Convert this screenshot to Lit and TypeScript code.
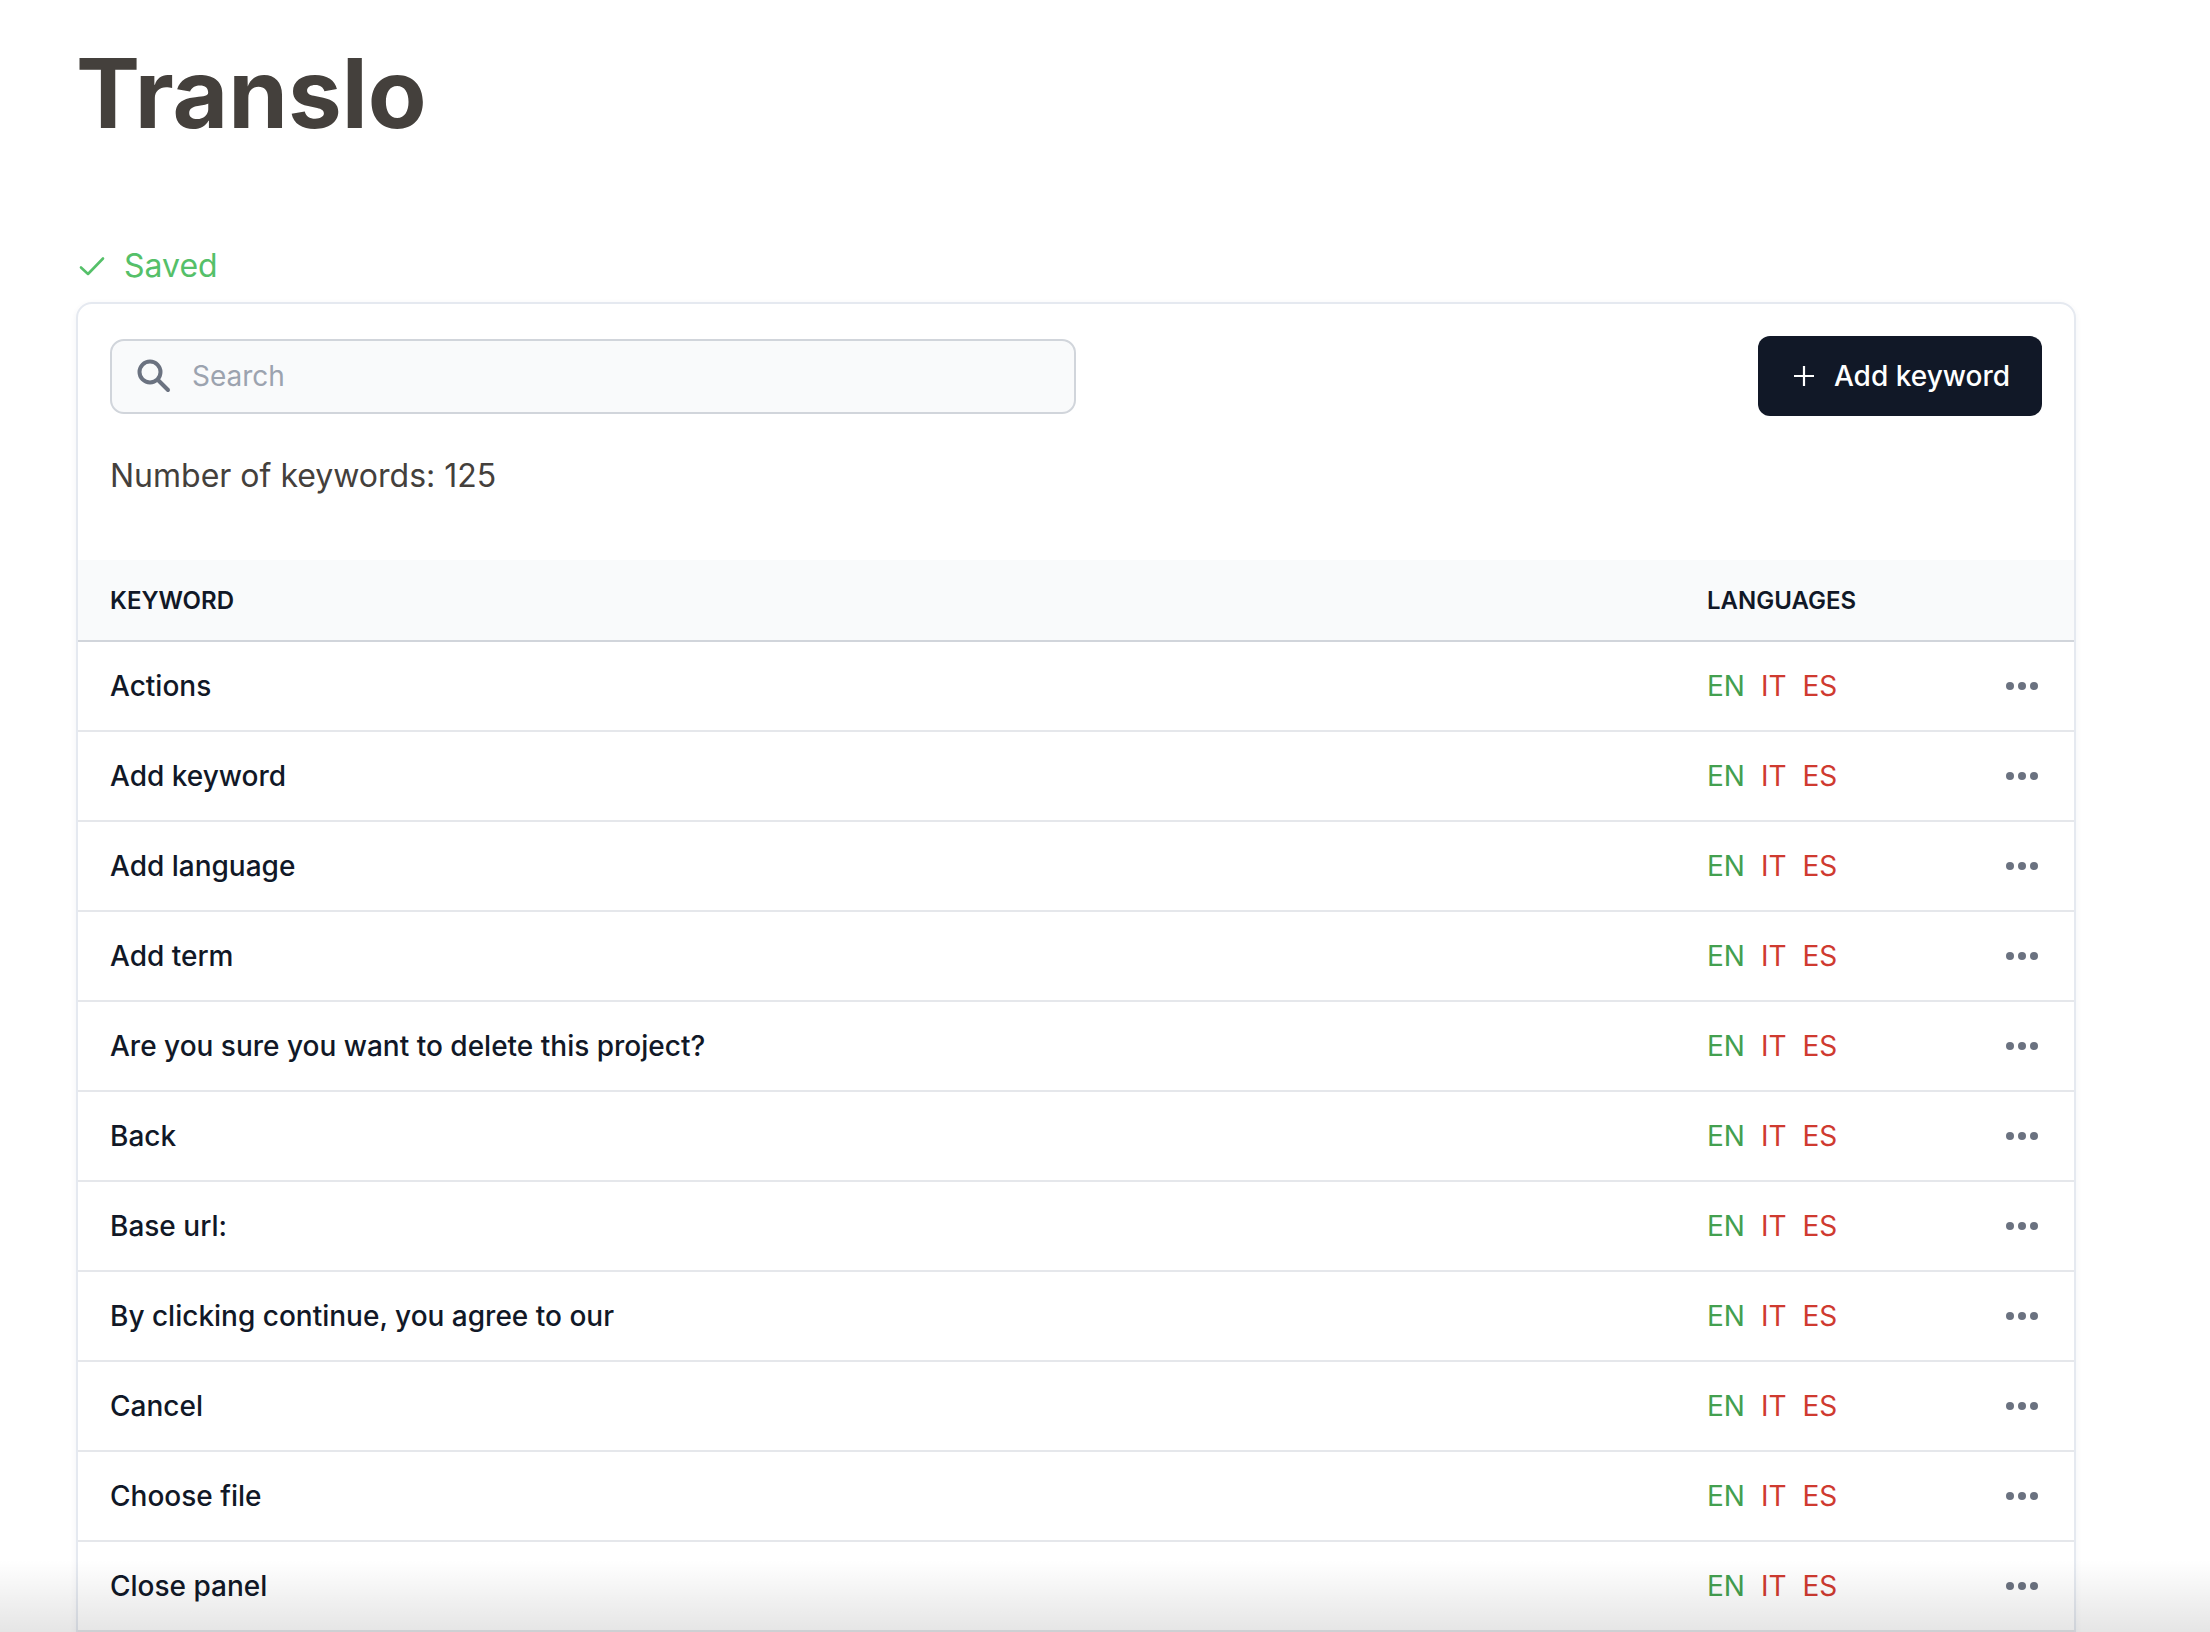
import { LitElement, html, css } from "lit";
import { customElement } from "lit/decorators.js";

const KEYWORDS = [
  "Actions",
  "Add keyword",
  "Add language",
  "Add term",
  "Are you sure you want to delete this project?",
  "Back",
  "Base url:",
  "By clicking continue, you agree to our",
  "Cancel",
  "Choose file",
  "Close panel",
];

@customElement("app-root")
export class AppRoot extends LitElement {
  static styles = css`
    :host {
      display: block;
      position: relative;
      height: 1632px;
      overflow: hidden;
      background: #fff;
      font-family: Inter, "Liberation Sans", sans-serif;
      color: #111827;
    }
    .page {
      padding: 29px 134px 0 76px;
    }
    h1 {
      margin: 0;
      font-size: 96px;
      line-height: 128px;
      font-weight: 700;
      color: #44403c;
    }
    .saved {
      display: flex;
      align-items: center;
      gap: 18px;
      margin-top: 89px;
      padding-left: 2px;
      height: 40px;
      color: #55c069;
      font-size: 32px;
      line-height: 40px;
    }
    .saved svg {
      width: 28px;
      height: 28px;
      display: block;
    }
    .card {
      margin-top: 16px;
      padding-bottom: 40px;
      border: 2px solid #e5e9f0;
      border-radius: 16px;
      box-shadow: 0 2px 6px rgba(30, 50, 90, 0.06);
      background: #fff;
    }
    .toolbar {
      display: flex;
      justify-content: space-between;
      align-items: center;
      padding: 32px 32px 0 32px;
    }
    .search {
      display: flex;
      align-items: center;
      gap: 20px;
      box-sizing: border-box;
      width: 966px;
      height: 75px;
      padding: 0 24px;
      border: 2px solid #d1d5db;
      border-radius: 14px;
      background: #f9fafb;
      color: #9ca3af;
      font-size: 28px;
    }
    .search svg {
      width: 36px;
      height: 36px;
      display: block;
      flex: none;
    }
    .add {
      display: flex;
      align-items: center;
      gap: 19px;
      box-sizing: border-box;
      width: 284px;
      height: 80px;
      padding: 0 0 0 3px;
      justify-content: center;
      border: 0;
      border-radius: 12px;
      background: #111827;
      color: #fff;
      font: inherit;
      font-size: 28px;
      font-weight: 500;
    }
    .add svg {
      width: 22px;
      height: 22px;
      display: block;
    }
    .count {
      padding: 0 32px;
      margin-top: 38px;
      font-size: 32px;
      line-height: 44px;
      color: #44403c;
    }
    .head,
    .row {
      display: grid;
      grid-template-columns: 1fr 265px 70px;
      align-items: center;
      padding: 0 32px;
      box-sizing: border-box;
    }
    .head {
      margin-top: 62px;
      height: 82px;
      background: #f9fafb;
      border-bottom: 2px solid #d1d5db;
      font-size: 24px;
      font-weight: 600;
      color: #111827;
    }
    .row {
      height: 90px;
      border-bottom: 2px solid #e5e7eb;
      font-size: 28px;
      font-weight: 500;
    }
    .langs {
      display: flex;
      gap: 16px;
      font-weight: 400;
    }
    .ok {
      color: #43a04f;
    }
    .missing {
      color: #cf3a30;
    }
    .more {
      display: block;
      width: 34px;
      height: 10px;
      justify-self: end;
      margin-right: 3px;
    }
    .fade {
      position: absolute;
      left: 0;
      right: 0;
      bottom: 0;
      height: 72px;
      background: linear-gradient(to bottom, rgba(0, 0, 0, 0), rgba(0, 0, 0, 0.1));
      pointer-events: none;
    }
  `;

  render() {
    return html`
      <div class="page">
        <h1>Translo</h1>
        <div class="saved">
          <svg viewBox="0 0 28 28" fill="none" stroke="currentColor" stroke-width="2.6" stroke-linecap="round" stroke-linejoin="round">
            <path d="M3 15.5 L10 22 L25 6.5" />
          </svg>
          <span>Saved</span>
        </div>
        <div class="card">
          <div class="toolbar">
            <div class="search">
              <svg viewBox="0 0 36 36" fill="none" stroke="#6b7280" stroke-width="4" stroke-linecap="round">
                <circle cx="14" cy="14" r="10.5" />
                <path d="M22 22 L32 32" />
              </svg>
              <span>Search</span>
            </div>
            <button class="add">
              <svg viewBox="0 0 22 22" fill="none" stroke="currentColor" stroke-width="2.2">
                <path d="M11 1 V21 M1 11 H21" />
              </svg>
              <span>Add keyword</span>
            </button>
          </div>
          <div class="count">Number of keywords: 125</div>
          <div class="head">
            <span>KEYWORD</span>
            <span>LANGUAGES</span>
            <span></span>
          </div>
          ${KEYWORDS.map(
            (k) => html`
              <div class="row">
                <span>${k}</span>
                <span class="langs">
                  <span class="ok">EN</span>
                  <span class="missing">IT</span>
                  <span class="missing">ES</span>
                </span>
                <svg class="more" viewBox="0 0 34 10" fill="#6b7280">
                  <circle cx="5" cy="5" r="4" />
                  <circle cx="17" cy="5" r="4" />
                  <circle cx="29" cy="5" r="4" />
                </svg>
              </div>
            `
          )}
        </div>
      </div>
      <div class="fade"></div>
    `;
  }
}
